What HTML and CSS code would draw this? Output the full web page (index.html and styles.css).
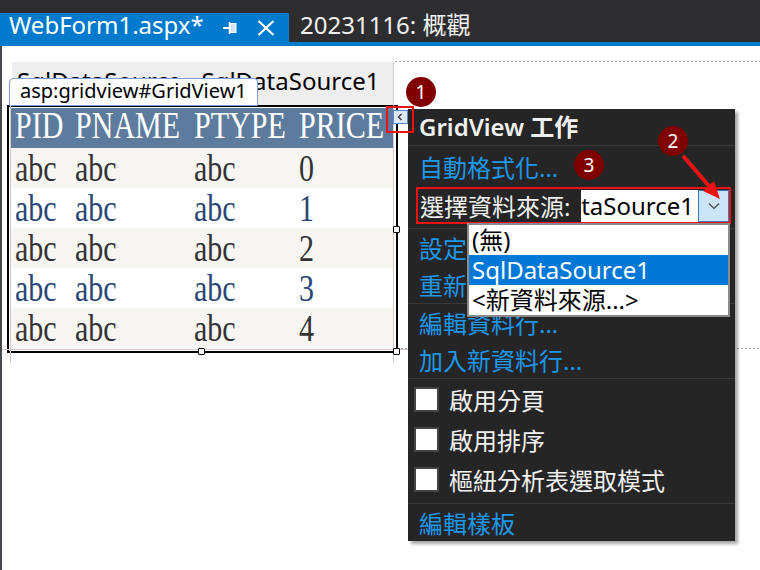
FILE: index.html
```html
<!DOCTYPE html>
<html lang="zh-Hant">
<head>
<meta charset="utf-8">
<title>WebForm1.aspx</title>
<link rel="stylesheet" href="styles.css">
</head>
<body>
<div class="tabbar">
  <div class="tab tab-active">
    <span class="tab-title">WebForm1.aspx*</span>
    <svg class="pin" width="14" height="12" viewBox="0 0 14 12">
      <rect x="7.5" y="1.5" width="5.5" height="9" fill="#cfe4f7" stroke="#ffffff" stroke-width="1"/>
      <line x1="6.5" y1="0" x2="6.5" y2="12" stroke="#ffffff" stroke-width="1.6"/>
      <line x1="0" y1="6" x2="6" y2="6" stroke="#ffffff" stroke-width="2"/>
    </svg>
    <svg class="close" width="18" height="16" viewBox="0 0 18 16">
      <line x1="1.5" y1="1" x2="16.5" y2="15" stroke="#ffffff" stroke-width="2.2"/>
      <line x1="16.5" y1="1" x2="1.5" y2="15" stroke="#ffffff" stroke-width="2.2"/>
    </svg>
  </div>
  <div class="tab tab-inactive">20231116: 概觀</div>
</div>
<div class="tabline"></div>

<main class="surface">
  <div class="ds-box">SqlDataSource - SqlDataSource1</div>
  <div class="grid-frame">
    <table class="grid">
      <colgroup><col class="c1"><col class="c2"><col class="c3"><col class="c4"></colgroup>
      <thead>
        <tr class="head"><th><span class="t">PID</span></th><th><span class="t">PNAME</span></th><th><span class="t">PTYPE</span></th><th><span class="t">PRICE</span></th></tr>
      </thead>
      <tbody>
        <tr class="odd"><td><span class="t">abc</span></td><td><span class="t">abc</span></td><td><span class="t">abc</span></td><td><span class="t">0</span></td></tr>
        <tr class="even"><td><span class="t">abc</span></td><td><span class="t">abc</span></td><td><span class="t">abc</span></td><td><span class="t">1</span></td></tr>
        <tr class="odd"><td><span class="t">abc</span></td><td><span class="t">abc</span></td><td><span class="t">abc</span></td><td><span class="t">2</span></td></tr>
        <tr class="even"><td><span class="t">abc</span></td><td><span class="t">abc</span></td><td><span class="t">abc</span></td><td><span class="t">3</span></td></tr>
        <tr class="odd"><td><span class="t">abc</span></td><td><span class="t">abc</span></td><td><span class="t">abc</span></td><td><span class="t">4</span></td></tr>
      </tbody>
    </table>
  </div>

  <div class="guide guide-v guide-left"></div>
  <div class="guide guide-v guide-right"></div>
  <div class="guide guide-h guide-bottom"></div>
  <div class="dots dots-top"></div>
  <div class="dots dots-bottom"></div>

  <div class="tag-label">asp:gridview#GridView1</div>

  <div class="handle handle-mr"></div>
  <div class="handle handle-bm"></div>
  <div class="handle handle-br"></div>

  <div class="smart-tag">
    <svg width="13" height="12" viewBox="0 0 13 12"><polyline points="7.5,3 4.5,6 7.5,9" fill="none" stroke="#333" stroke-width="1.3"/></svg>
  </div>

  <div class="panel">
    <div class="panel-title">GridView 工作</div>
    <div class="section section-b">
      <div class="row row-tall link">自動格式化...</div>
      <div class="choose">
        <span class="choose-label">選擇資料來源:</span>
        <div class="combo">
          <div class="combo-text"><span>SqlDataSource1</span></div>
          <div class="combo-btn">
            <svg width="12" height="8" viewBox="0 0 12 8"><polyline points="1,1.5 6,6.5 11,1.5" fill="none" stroke="#444" stroke-width="1.2"/></svg>
          </div>
        </div>
      </div>
    </div>
    <div class="section">
      <div class="row link">設定資料來源...</div>
      <div class="row link">重新整理結構描述</div>
    </div>
    <div class="section">
      <div class="row link">編輯資料行...</div>
      <div class="row link">加入新資料行...</div>
    </div>
    <div class="section section-e">
      <div class="check-row"><span class="box"></span><span>啟用分頁</span></div>
      <div class="check-row"><span class="box"></span><span>啟用排序</span></div>
      <div class="check-row"><span class="box"></span><span>樞紐分析表選取模式</span></div>
    </div>
    <div class="section section-last">
      <div class="row link">編輯樣板</div>
    </div>

    <div class="dropdown">
      <div class="dd-item">(無)</div>
      <div class="dd-item selected">SqlDataSource1</div>
      <div class="dd-item">&lt;新資料來源...&gt;</div>
    </div>
  </div>

  <div class="mark-red"></div>

  <svg class="arrow" width="50" height="52" viewBox="0 0 50 52">
    <line x1="8" y1="7" x2="33" y2="36" stroke="#ee1111" stroke-width="4" stroke-linecap="round"/>
    <polygon points="44,49 27,41 38,31" fill="#ee1111"/>
  </svg>

  <div class="badge badge-1">1</div>
  <div class="badge badge-2">2</div>
  <div class="badge badge-3">3</div>
</main>
</body>
</html>
```

FILE: styles.css
```css
* { box-sizing: border-box; }
html, body { margin: 0; padding: 0; }
body {
  width: 760px;
  height: 570px;
  overflow: hidden;
  background: #ffffff;
  font-family: "Noto Sans", "Noto Sans CJK TC", sans-serif;
}

/* ---------- tabs ---------- */
.tabbar {
  height: 42px;
  background: #2d2d30;
  display: flex;
  align-items: flex-end;
}
.tab { height: 29px; display: flex; align-items: center; }
.tab-active {
  width: 289px;
  background: #007acc;
  color: #ffffff;
  padding: 0 14px 0 9px;
}
.tab-title {
  flex: 1;
  align-self: flex-start;
  font-size: 24px;
  line-height: 24px;
  white-space: nowrap;
}
.pin { margin-right: 20px; }
.tab-inactive {
  padding-left: 11px;
  align-items: flex-start;
  color: #f1f1f1;
  font-size: 24px;
  line-height: 24px;
  white-space: nowrap;
}
.tabline { height: 4px; background: #007acc; }

/* ---------- design surface ---------- */
.surface {
  position: relative;
  height: 524px;
  padding-top: 16px;
  border-left: 2px solid #48484c;
}
.ds-box {
  margin-left: 10px;
  width: 382px;
  height: 43px;
  background: #eeeeee;
  border-right: 1px solid #cfcfcf;
  padding-left: 5px;
  font-size: 24px;
  line-height: 37px;
  color: #000;
  white-space: nowrap;
  overflow: hidden;
}
.grid-frame {
  margin-left: 5px;
  width: 391px;
  height: 248px;
  border: 2px solid #000;
  padding: 1px 0 0 2px;
}
.grid {
  width: 382px;
  border-collapse: collapse;
  border-spacing: 0;
  table-layout: fixed;
  font-family: "Liberation Serif", serif;
  font-size: 38px;
  font-weight: normal;
}
.c1 { width: 60px; }
.c2 { width: 119px; }
.c3 { width: 105px; }
.c4 { width: 98px; }
.grid th, .grid td {
  height: 40px;
  padding: 0 0 0 4px;
  text-align: left;
  font-weight: normal;
  white-space: nowrap;
  overflow: visible;
}
.grid td { line-height: 40px; vertical-align: top; }
.grid th { line-height: 34px; vertical-align: top; }
.grid .t {
  display: inline-block;
  transform: scaleX(0.79);
  transform-origin: left center;
}
.head { background: #5d7b9d; color: #ffffff; }
.odd { background: #f7f6f3; color: #333333; }
.even { background: #ffffff; color: #284775; }

/* guides */
.guide { position: absolute; background: #dcc5c5; }
.guide-v { width: 1px; top: 59px; height: 258px; }
.guide-left { left: 8px; }
.guide-right { left: 391px; }
.guide-h { height: 1px; left: 0; top: 303px; width: 406px; }
.dots {
  position: absolute;
  height: 1px;
  background-image: repeating-linear-gradient(to right, #a8a8a8 0 2px, transparent 2px 4px);
}
.dots-top { left: 393px; top: 15px; width: 365px; }
.dots-bottom { left: 395px; top: 302px; width: 363px; }

.tag-label {
  position: absolute;
  left: 7px;
  top: 32px;
  width: 249px;
  height: 28px;
  background: #ffffff;
  border: 1px solid #7d9ed4;
  border-radius: 4px 4px 0 0;
  padding-left: 10px;
  font-size: 20px;
  line-height: 24px;
  color: #000;
  white-space: nowrap;
}

.handle {
  position: absolute;
  width: 7px;
  height: 7px;
  background: #fff;
  border: 1.5px solid #000;
  border-radius: 1px;
}
.handle-mr { left: 391px; top: 180px; }
.handle-bm { left: 196px; top: 302px; }
.handle-br { left: 391px; top: 302px; }

.smart-tag {
  position: absolute;
  left: 391px;
  top: 64px;
  width: 15px;
  height: 14px;
  background: #dfe8f5;
  border: 1px solid #5a88cc;
  display: flex;
  align-items: center;
  justify-content: center;
}
.mark-red {
  position: absolute;
  left: 384px;
  top: 60px;
  width: 28px;
  height: 27px;
  border: 2px solid #ee1111;
}

/* ---------- smart tag panel ---------- */
.panel {
  position: absolute;
  left: 406px;
  top: 63px;
  width: 327px;
  height: 432px;
  background: #252526;
  box-shadow: 3px 3px 3px rgba(0, 0, 0, 0.35);
  color: #f1f1f1;
  font-size: 24px;
}
.panel-title {
  height: 37px;
  border-bottom: 1px solid #3a3a3d;
  padding-left: 11px;
  font-weight: 600;
  line-height: 36px;
  white-space: nowrap;
}
.section { border-bottom: 1px solid #3a3a3d; }
.section-last { border-bottom: none; }
.row {
  height: 37px;
  display: flex;
  align-items: center;
  padding-left: 11px;
  white-space: nowrap;
}
.row-tall { height: 41px; }
.link { color: #1c97ea; }
.section-b { padding-bottom: 4px; }
.choose {
  margin-left: 8px;
  width: 315px;
  height: 37px;
  border: 2px solid #ee1111;
  display: flex;
  align-items: center;
}
.choose-label {
  width: 163px;
  padding-left: 2px;
  white-space: nowrap;
}
.combo {
  display: flex;
  width: 148px;
  height: 32px;
  background: #ffffff;
}
.combo-text {
  flex: 1;
  overflow: hidden;
  display: flex;
  justify-content: flex-end;
  padding-right: 4px;
  color: #000;
  line-height: 32px;
  white-space: nowrap;
}
.combo-btn {
  width: 31px;
  height: 32px;
  background: #cce4f7;
  border: 1px solid #3d7bb5;
  display: flex;
  align-items: center;
  justify-content: center;
}
.section-e { padding-bottom: 4px; }
.check-row {
  height: 40px;
  display: flex;
  align-items: center;
  padding-left: 6px;
  white-space: nowrap;
}
.box {
  width: 25px;
  height: 25px;
  background: #ffffff;
  border: 2px solid #444446;
  margin-right: 10px;
}

.dropdown {
  position: absolute;
  left: 59px;
  top: 114px;
  width: 263px;
  height: 94px;
  background: #ffffff;
  border: 2px solid #8a8a8a;
  color: #000;
}
.dd-item {
  height: 30px;
  line-height: 30px;
  padding-left: 3px;
  white-space: nowrap;
}
.dd-item.selected { background: #0078d7; color: #ffffff; }

/* ---------- annotations ---------- */
.arrow { position: absolute; left: 674px; top: 104px; }
.badge {
  position: absolute;
  width: 30px;
  height: 30px;
  border-radius: 50%;
  background: #800000;
  color: #ffffff;
  font-size: 19px;
  display: flex;
  align-items: center;
  justify-content: center;
}
.badge-1 { left: 404px; top: 31px; }
.badge-2 { left: 656px; top: 80px; }
.badge-3 { left: 572px; top: 104px; }
```
